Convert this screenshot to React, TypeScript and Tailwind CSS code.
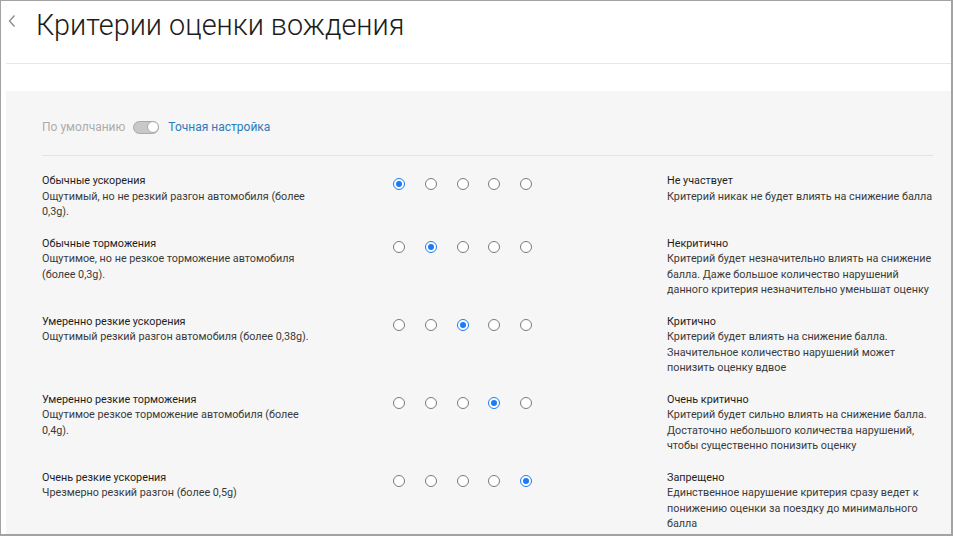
import React from "react";

const rows = [
  {
    title: "Обычные ускорения",
    desc: "Ощутимый, но не резкий разгон автомобиля (более 0,3g).",
    sel: 0,
    rTitle: "Не участвует",
    rDesc: "Критерий никак не будет влиять на снижение балла",
  },
  {
    title: "Обычные торможения",
    desc: "Ощутимое, но не резкое торможение автомобиля (более 0,3g).",
    sel: 1,
    rTitle: "Некритично",
    rDesc:
      "Критерий будет незначительно влиять на снижение балла. Даже большое количество нарушений данного критерия незначительно уменьшат оценку",
  },
  {
    title: "Умеренно резкие ускорения",
    desc: "Ощутимый резкий разгон автомобиля (более 0,38g).",
    sel: 2,
    rTitle: "Критично",
    rDesc:
      "Критерий будет влиять на снижение балла. Значительное количество нарушений может понизить оценку вдвое",
  },
  {
    title: "Умеренно резкие торможения",
    desc: "Ощутимое резкое торможение автомобиля (более 0,4g).",
    sel: 3,
    rTitle: "Очень критично",
    rDesc:
      "Критерий будет сильно влиять на снижение балла. Достаточно небольшого количества нарушений, чтобы существенно понизить оценку",
  },
  {
    title: "Очень резкие ускорения",
    desc: "Чрезмерно резкий разгон (более 0,5g)",
    sel: 4,
    rTitle: "Запрещено",
    rDesc:
      "Единственное нарушение критерия сразу ведет к понижению оценки за поездку до минимального балла",
  },
];

function Radio({ checked }: { checked: boolean }) {
  if (checked) {
    return (
      <div className="w-[12px] h-[12px] rounded-full border-[1.5px] border-[#1a7cf5] bg-white flex items-center justify-center shrink-0">
        <div className="w-[6px] h-[6px] rounded-full bg-[#1a7cf5]" />
      </div>
    );
  }
  return (
    <div className="w-[12px] h-[12px] rounded-full border border-[#7a7a7a] bg-white shrink-0" />
  );
}

export default function App() {
  return (
    <div
      className="w-[953px] h-[536px] overflow-hidden bg-white border-t border-l border-r-2 border-b-2 border-[#a3a3a3] flex flex-col"
      style={{ fontFamily: "Roboto, 'Noto Sans', sans-serif" }}
    >
      <div className="pl-[5px] flex flex-col flex-1 min-h-0">
        <div className="h-[63px] shrink-0 flex items-start border-b border-[#e6e6e6]">
          <svg
            width="10"
            height="14"
            viewBox="0 0 10 14"
            className="mt-[13px] ml-[1px]"
          >
            <path d="M7.5 1.5 L2.5 7 L7.5 12.5" stroke="#8a8a8a" strokeWidth="1.3" fill="none" />
          </svg>
          <div className="ml-[19px] pt-[9px] text-[28.8px] leading-[30px] font-light text-[#1c1c1c]">
            Критерии оценки вождения
          </div>
        </div>
        <div className="h-[27px] shrink-0" />
        <div className="bg-[#f6f6f6] flex-1 pl-[36px] pr-[18px]">
          <div className="pt-[29px] pb-[21px] border-b border-[#e3e3e3]">
            <div className="h-[14px] flex items-center gap-[8px] text-[12px]">
              <span className="text-[#acacac]">По умолчанию</span>
              <div className="w-[26px] h-[13px] rounded-full bg-[#c8c8c8] border border-[#a9a9a9] flex items-center justify-end">
                <div className="w-[12px] h-[12px] rounded-full bg-white border border-[#a9a9a9] -mr-[1px]" />
              </div>
              <span className="text-[#2b7bbd] ml-[1px]">Точная настройка</span>
            </div>
          </div>
          <div className="pt-[17px] flex flex-col gap-[16px] text-[10.8px] leading-[15.5px]">
            {rows.map((r, i) => (
              <div key={i} className="flex items-start">
                <div className="w-[351px] shrink-0">
                  <div className="w-[272px]">
                    <div className="text-[#1e1e1e]">{r.title}</div>
                    <div className="text-[#3a3a3a]">{r.desc}</div>
                  </div>
                </div>
                <div className="w-[274px] shrink-0 flex gap-[19.75px] pt-[5px]">
                  {[0, 1, 2, 3, 4].map((j) => (
                    <Radio key={j} checked={j === r.sel} />
                  ))}
                </div>
                <div className="w-[272px] shrink-0">
                  <div className="text-[#1e1e1e]">{r.rTitle}</div>
                  <div className="text-[#3a3a3a]">{r.rDesc}</div>
                </div>
              </div>
            ))}
          </div>
        </div>
      </div>
    </div>
  );
}
